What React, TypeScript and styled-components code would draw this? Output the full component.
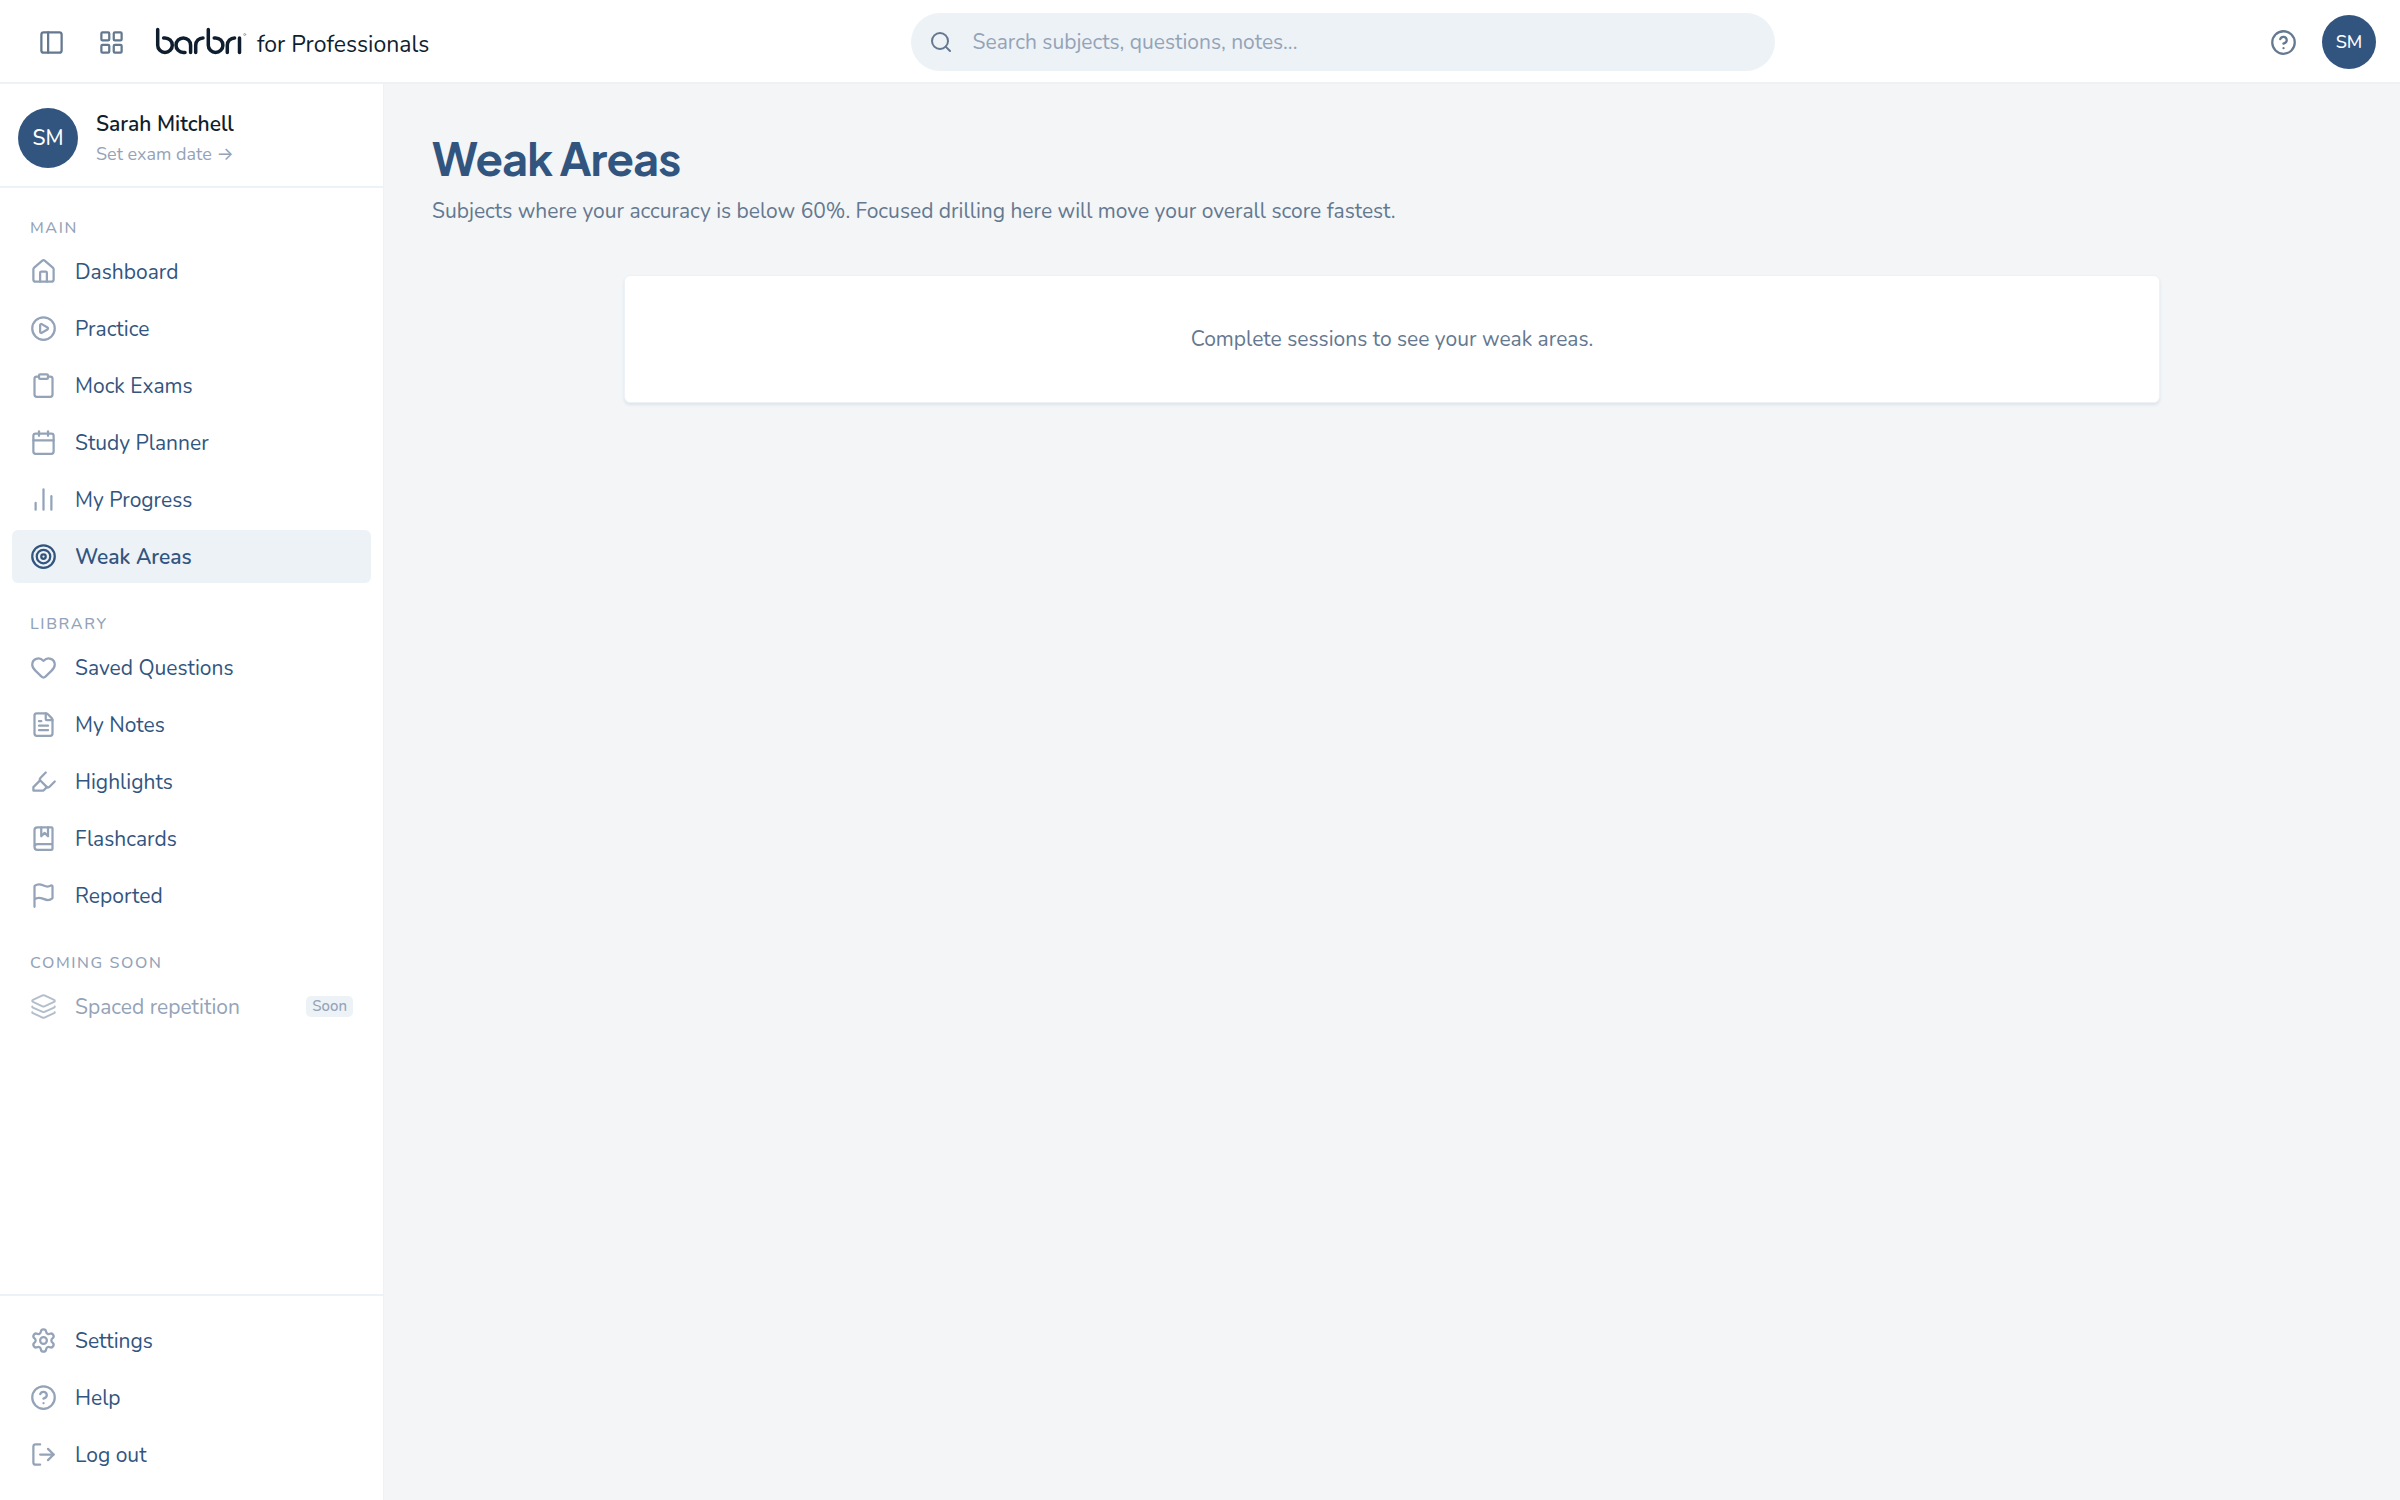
import React from 'react';
import styled, { createGlobalStyle } from 'styled-components';
import {
  BookMarked,
  Calendar,
  ChartNoAxesColumn,
  CircleHelp,
  CirclePlay,
  Clipboard,
  FileText,
  Flag,
  Heart,
  Highlighter,
  House,
  Layers,
  LayoutGrid,
  LogOut,
  PanelLeft,
  Search,
  Settings,
  Target,
  type LucideIcon,
} from 'lucide-react';

const c = {
  navy: '#32557f',
  ink: '#0f1e2e',
  slate: '#64788f',
  muted: '#94a3b8',
  tint: '#edf2f6',
  page: '#f3f5f7',
  white: '#ffffff',
};

const GlobalStyle = createGlobalStyle`
  *, *::before, *::after { box-sizing: border-box; }
  body {
    margin: 0;
    background: ${c.page};
    color: ${c.ink};
    font-family: 'Nunito', 'Open Sans', sans-serif;
    font-size: 21px;
    line-height: 30px;
  }
  button, input { font: inherit; }
  a { color: inherit; text-decoration: none; }
`;

const Shell = styled.div`
  display: grid;
  grid-template: 84px minmax(0, 1fr) / 384px minmax(0, 1fr);
  min-height: 100vh;
`;

const TopBar = styled.header`
  grid-column: 1 / -1;
  display: flex;
  align-items: center;
  padding: 0 24px;
  background: ${c.white};
  box-shadow: inset 0 -2px 0 ${c.tint};
`;

const BarGroup = styled.div<{ $gap: number }>`
  display: flex;
  align-items: center;
  gap: ${(p) => p.$gap}px;
`;

const IconButton = styled.button`
  display: grid;
  place-items: center;
  width: 54px;
  height: 54px;
  padding: 0;
  border: 0;
  border-radius: 6px;
  background: transparent;
  color: ${c.slate};
  cursor: pointer;
`;

const Brand = styled.a`
  display: flex;
  align-items: center;
  gap: 10px;
  margin-left: 11px;
  font-size: 23px;
`;

const BrandSuffix = styled.span`
  padding-top: 6px;
`;

const SearchArea = styled.div`
  flex: 1;
  display: flex;
  justify-content: center;
`;

const SearchBox = styled.label`
  display: flex;
  align-items: center;
  gap: 20px;
  width: 100%;
  max-width: 864px;
  height: 58px;
  padding: 0 18px;
  border-radius: 29px;
  background: ${c.tint};
  color: ${c.slate};
`;

const SearchInput = styled.input`
  flex: 1;
  min-width: 0;
  padding: 0;
  border: 0;
  outline: 0;
  background: transparent;
  color: ${c.ink};
  &::placeholder { color: ${c.muted}; opacity: 1; }
`;

const Avatar = styled.span<{ $size: number; $font: number }>`
  display: grid;
  place-items: center;
  flex: none;
  width: ${(p) => p.$size}px;
  height: ${(p) => p.$size}px;
  border-radius: 50%;
  background: ${c.navy};
  color: ${c.white};
  font-size: ${(p) => p.$font}px;
  font-weight: 500;
`;

const AvatarButton = styled.button`
  padding: 0;
  border: 0;
  border-radius: 50%;
  background: transparent;
  cursor: pointer;
`;

const Sidebar = styled.aside`
  display: flex;
  flex-direction: column;
  background: ${c.white};
  border-right: 1px solid ${c.tint};
`;

const Profile = styled.div`
  display: flex;
  align-items: center;
  gap: 18px;
  padding: 24px 18px 18px;
  border-bottom: 2px solid ${c.tint};
`;

const ProfileText = styled.div`
  display: flex;
  flex-direction: column;
`;

const ProfileName = styled.span`
  font-weight: 600;
  line-height: 32px;
`;

const ExamLink = styled.a`
  && { color: ${c.muted}; }
  font-size: 18px;
  line-height: 28px;
`;

const Arrow = styled.span`
  font-family: 'Inter', sans-serif;
  line-height: 1;
`;

const Nav = styled.nav`
  flex: 1;
  display: flex;
  flex-direction: column;
  gap: 29px;
  padding: 28px 12px;
`;

const Section = styled.section`
  display: flex;
  flex-direction: column;
`;

const SectionTitle = styled.h2`
  margin: 0;
  padding: 0 18px 5px;
  color: ${c.muted};
  font-size: 16px;
  font-weight: 500;
  line-height: 24px;
  letter-spacing: 0.1em;
  text-transform: uppercase;
`;

const List = styled.ul`
  display: flex;
  flex-direction: column;
  gap: 4px;
  margin: 0;
  padding: 0;
  list-style: none;
`;

const NavLink = styled.a<{ $active?: boolean; $disabled?: boolean }>`
  display: flex;
  align-items: center;
  gap: 18px;
  height: 53px;
  padding: 0 18px;
  border-radius: 6px;
  background: ${(p) => (p.$active ? c.tint : 'transparent')};
  && { color: ${(p) => (p.$disabled ? c.muted : c.navy)}; }
  font-weight: ${(p) => (p.$active ? 600 : 400)};
  svg {
    flex: none;
    color: ${(p) => (p.$active ? c.navy : c.muted)};
    opacity: ${(p) => (p.$disabled ? 0.7 : 1)};
  }
`;

const SoonBadge = styled.span`
  margin-left: auto;
  padding: 0 6px;
  border-radius: 5px;
  background: ${c.tint};
  color: ${c.muted};
  font-size: 15px;
  font-weight: 500;
  line-height: 21px;
`;

const SidebarFooter = styled.div`
  padding: 18px 12px 19px;
  border-top: 2px solid ${c.tint};
`;

const Main = styled.main`
  padding: 48px;
`;

const PageTitle = styled.h1`
  margin: 0 0 12px;
  color: ${c.navy};
  font-family: 'Plus Jakarta Sans', 'Inter', sans-serif;
  font-size: 45px;
  font-weight: 700;
  line-height: 52px;
  letter-spacing: -0.02em;
`;

const PageIntro = styled.p`
  margin: 0 0 48px;
  color: ${c.slate};
  line-height: 31px;
`;

const EmptyCard = styled.section`
  max-width: 1536px;
  margin: 0 auto;
  padding: 48px;
  border: 1px solid ${c.tint};
  border-radius: 6px;
  background: ${c.white};
  box-shadow: 0 2px 3px rgba(48, 85, 127, 0.1);
  color: ${c.slate};
  text-align: center;
`;

const BarbriLogo = () => (
  <svg width="92" height="30" viewBox="0 0 92 30" fill="none" stroke={c.ink} strokeWidth="3.5" strokeLinecap="round" role="img" aria-label="barbri">
    <path d="M2.7 2.6V18.2a7.3 7.3 0 1 0 7.3-7.3H8.6" />
    <path d="M30 25.5h-1.7a7.3 7.3 0 1 1 7.3-7.3v7.3" />
    <path d="M40.7 25.5v-7.3a7.3 7.3 0 0 1 7.3-7.3" />
    <path d="M53.3 2.6v15.6a7.3 7.3 0 1 0 7.3-7.3h-1.4" />
    <path d="M72.3 25.5v-7.3a7.3 7.3 0 0 1 7.3-7.3" />
    <path d="M84.5 10.9v14.6" />
    <circle cx="89.7" cy="7.5" r="1" stroke={c.muted} strokeWidth="1" />
  </svg>
);

type Item = { label: string; icon: LucideIcon; active?: boolean; disabled?: boolean };

const sections: { title: string; items: Item[] }[] = [
  {
    title: 'Main',
    items: [
      { label: 'Dashboard', icon: House },
      { label: 'Practice', icon: CirclePlay },
      { label: 'Mock Exams', icon: Clipboard },
      { label: 'Study Planner', icon: Calendar },
      { label: 'My Progress', icon: ChartNoAxesColumn },
      { label: 'Weak Areas', icon: Target, active: true },
    ],
  },
  {
    title: 'Library',
    items: [
      { label: 'Saved Questions', icon: Heart },
      { label: 'My Notes', icon: FileText },
      { label: 'Highlights', icon: Highlighter },
      { label: 'Flashcards', icon: BookMarked },
      { label: 'Reported', icon: Flag },
    ],
  },
  {
    title: 'Coming soon',
    items: [{ label: 'Spaced repetition', icon: Layers, disabled: true }],
  },
];

const footerItems: Item[] = [
  { label: 'Settings', icon: Settings },
  { label: 'Help', icon: CircleHelp },
  { label: 'Log out', icon: LogOut },
];

const NavList = ({ items }: { items: Item[] }) => (
  <List>
    {items.map(({ label, icon: Icon, active, disabled }) => (
      <li key={label}>
        <NavLink
          href={disabled ? undefined : '#'}
          aria-current={active ? 'page' : undefined}
          aria-disabled={disabled}
          $active={active}
          $disabled={disabled}
        >
          <Icon size={27} strokeWidth={disabled ? 1.75 : 2} />
          {label}
          {disabled && <SoonBadge>Soon</SoonBadge>}
        </NavLink>
      </li>
    ))}
  </List>
);

export default function App() {
  return (
    <>
      <GlobalStyle />
      <Shell>
        <TopBar>
          <BarGroup $gap={6}>
            <IconButton aria-label="Toggle sidebar">
              <PanelLeft size={27} strokeWidth={2} />
            </IconButton>
            <IconButton aria-label="Apps">
              <LayoutGrid size={27} strokeWidth={2} />
            </IconButton>
            <Brand href="#">
              <BarbriLogo />
              <BrandSuffix>for Professionals</BrandSuffix>
            </Brand>
          </BarGroup>
          <SearchArea>
            <SearchBox>
              <Search size={24} strokeWidth={2} />
              <SearchInput type="search" aria-label="Search" placeholder="Search subjects, questions, notes..." />
            </SearchBox>
          </SearchArea>
          <BarGroup $gap={12}>
            <IconButton aria-label="Help">
              <CircleHelp size={27} strokeWidth={2} />
            </IconButton>
            <AvatarButton aria-label="Account">
              <Avatar $size={54} $font={18}>SM</Avatar>
            </AvatarButton>
          </BarGroup>
        </TopBar>
        <Sidebar>
          <Profile>
            <Avatar $size={60} $font={21}>SM</Avatar>
            <ProfileText>
              <ProfileName>Sarah Mitchell</ProfileName>
              <ExamLink href="#">
                Set exam date <Arrow>→</Arrow>
              </ExamLink>
            </ProfileText>
          </Profile>
          <Nav aria-label="Primary">
            {sections.map((section) => (
              <Section key={section.title}>
                <SectionTitle>{section.title}</SectionTitle>
                <NavList items={section.items} />
              </Section>
            ))}
          </Nav>
          <SidebarFooter>
            <NavList items={footerItems} />
          </SidebarFooter>
        </Sidebar>
        <Main>
          <PageTitle>Weak Areas</PageTitle>
          <PageIntro>
            Subjects where your accuracy is below 60%. Focused drilling here will move your overall score fastest.
          </PageIntro>
          <EmptyCard>Complete sessions to see your weak areas.</EmptyCard>
        </Main>
      </Shell>
    </>
  );
}
